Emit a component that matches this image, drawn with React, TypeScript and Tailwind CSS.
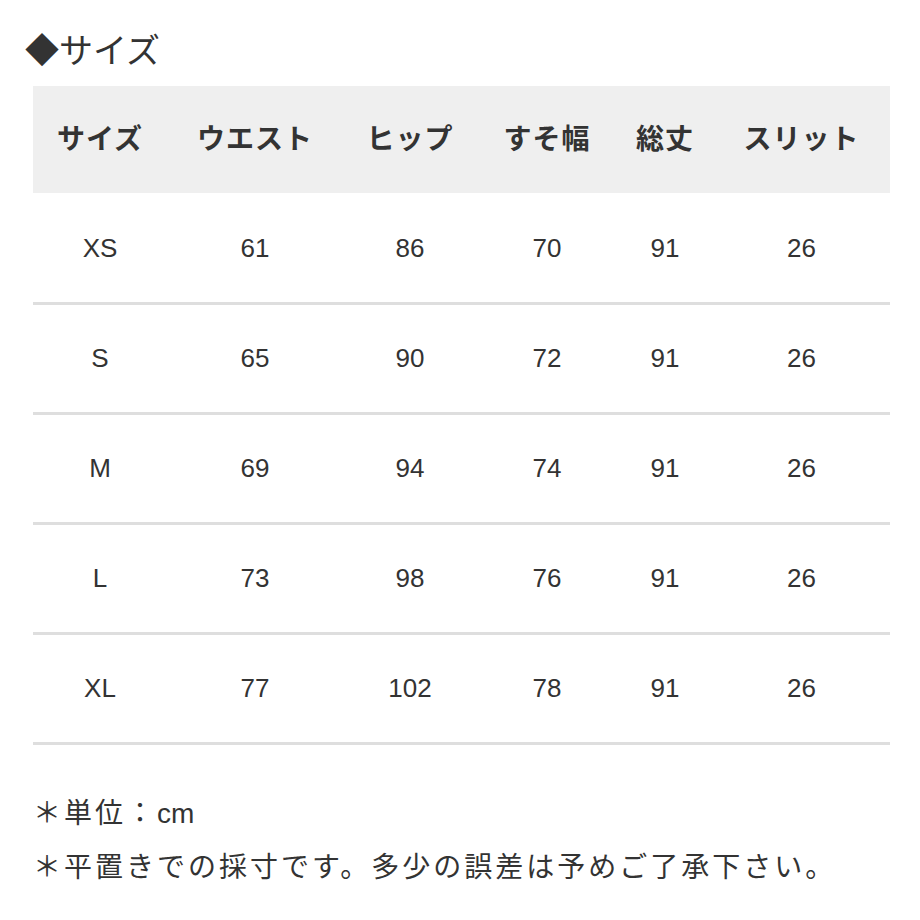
import React from 'react';

const headers = ['サイズ', 'ウエスト', 'ヒップ', 'すそ幅', '総丈', 'スリット'];

const rows: string[][] = [
  ['XS', '61', '86', '70', '91', '26'],
  ['S', '65', '90', '72', '91', '26'],
  ['M', '69', '94', '74', '91', '26'],
  ['L', '73', '98', '76', '91', '26'],
  ['XL', '77', '102', '78', '91', '26'],
];

const cols = 'grid grid-cols-[134px_176px_134px_140px_96px_177px]';

const App: React.FC = () => {
  return (
    <div
      className="w-[920px] h-[920px] bg-white text-[#333]"
      style={{ fontFamily: '"Liberation Sans", "Noto Sans CJK JP", sans-serif' }}
    >
      <div className="pl-[25px] pt-[31px] pb-[14px] text-[34px] leading-[41px]">◆サイズ</div>

      <div className="ml-[33px] w-[857px]">
        <div className={`${cols} h-[107px] mb-[2px] bg-[#efefef] items-center`}>
          {headers.map((h) => (
            <div key={h} className="text-center text-[28px] font-bold tracking-[1px]">
              {h}
            </div>
          ))}
        </div>

        {rows.map((row) => (
          <div key={row[0]} className={`${cols} h-[110px] border-b-[3px] border-[#dedede] items-center`}>
            {row.map((cell, i) => (
              <div key={i} className="text-center text-[26px] pb-[1px]">
                {cell}
              </div>
            ))}
          </div>
        ))}

        <div className="mt-[42px] text-[28px] leading-[54px] tracking-[3px]">
          <p>
            ＊単位：<span className="tracking-normal">cm</span>
          </p>
          <p>＊平置きでの採寸です。多少の誤差は予めご了承下さい。</p>
        </div>
      </div>
    </div>
  );
};

export default App;
